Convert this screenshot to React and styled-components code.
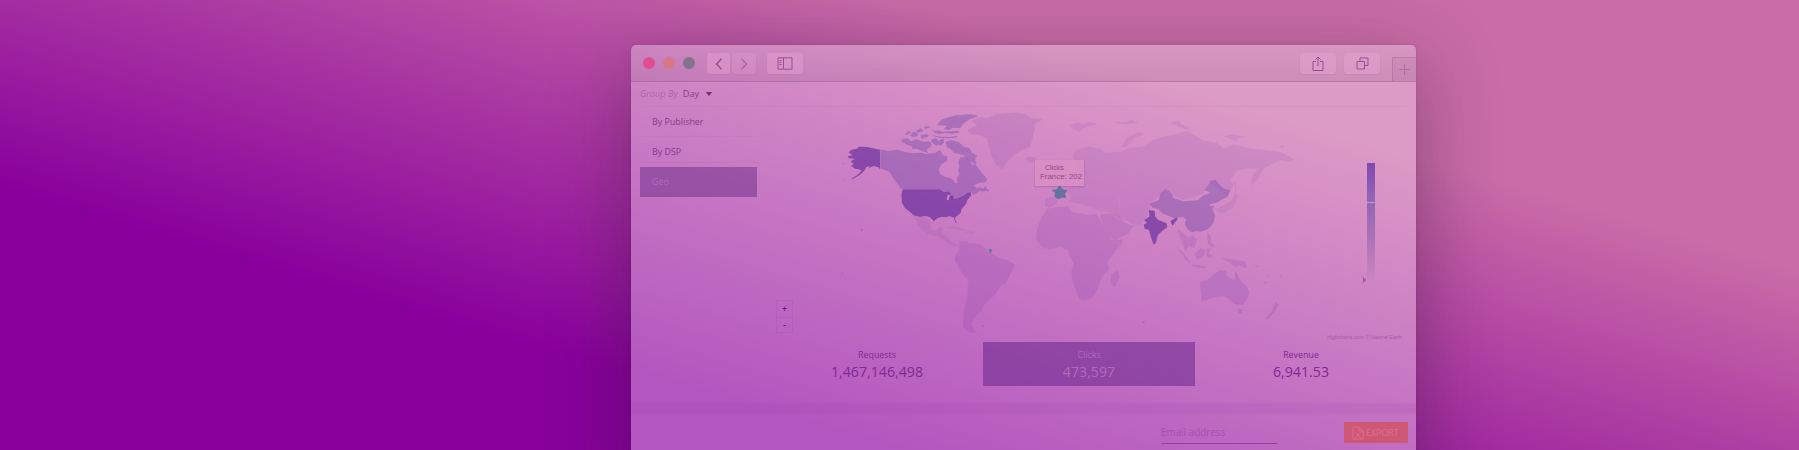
import React from "react";
import styled, { createGlobalStyle } from "styled-components";

const Global = createGlobalStyle`
  * { box-sizing: border-box; }
  body { margin: 0; font-family: "Open Sans", "Noto Sans", sans-serif; color: #7b3391; }
`;
const Hero = styled.main`
  height: 450px; overflow: hidden; padding: 45px 383px 0 631px;
  background: linear-gradient(16.7deg, #88009c 26.5%, #c96ca7 72.7%);
`;
const Window = styled.section`
  width: 785px; height: 460px; border-radius: 5px 5px 0 0; overflow: hidden;
  background: rgba(255, 238, 255, 0.36);
  box-shadow: 0 20px 80px rgba(40, 20, 40, 0.4), 0 0 3px rgba(80, 20, 80, 0.15);
`;
const Toolbar = styled.header`
  height: 37px; display: flex; align-items: center; padding: 0 0 1px 12px;
  background: linear-gradient(rgba(150, 100, 145, 0.08), rgba(150, 90, 135, 0.22));
  border-bottom: 1px solid rgba(125, 65, 120, 0.34);
`;
const Dot = styled.i`
  width: 12px; height: 12px; border-radius: 50%; margin: 0 8px 0 0; background: ${(p) => p.$color};
  position: relative; left: -0.5px;
`;
const ToolButton = styled.button`
  width: ${(p) => p.$w}px; height: 21px; margin: 2px 0 0 ${(p) => p.$gap || 0}px; padding: 0; border: 0;
  border-radius: 3px; display: grid; place-items: center; color: #9b4e94;
  background: rgba(235, 170, 215, 0.36); box-shadow: 0 1px 1px rgba(140, 70, 130, 0.12);
  opacity: ${(p) => (p.$dim ? 0.62 : 1)};
`;
const Spacer = styled.div`flex: 1;`;
const NewTab = styled.div`
  width: 24px; height: 24px; align-self: flex-end; margin: 0 0 -1px 12px; display: grid; place-items: center;
  color: #b06ea2; background: rgba(160, 90, 145, 0.13);
  border: solid rgba(145, 75, 135, 0.28); border-width: 1px 0 0 1px;
`;
const GroupBar = styled.div`
  height: 25px; margin: 0 10px 0 9px; display: flex; align-items: center; gap: 5px; padding-bottom: 1px; font-size: 9.2px;
  border-bottom: 1px solid rgba(150, 80, 150, 0.08); color: #873c8c;
`;
const GroupLabel = styled.em`color: #ae62ac;`;
const Caret = styled.i`
  margin-left: 2px; border: 3px solid transparent; border-top: 4px solid #74287c; border-bottom: 0;
`;
const Body = styled.div`display: flex; height: 297px;`;
const Side = styled.nav`width: 117px; margin-left: 9px; flex: none;`;
const SideItem = styled.div`
  height: ${(p) => p.$h}px; padding-left: 12px; font-size: 8.9px; line-height: ${(p) => p.$line || 30}px;
  border-bottom: 1px solid rgba(150, 80, 150, 0.08);
  color: ${(p) => (p.$active ? "#ae6cb6" : "#873c8c")};
  background: ${(p) => (p.$active ? "rgba(105, 45, 135, 0.5)" : "transparent")};
  margin-top: ${(p) => p.$top || 0}px;
`;
const Main = styled.div`flex: 1; display: flex; flex-direction: column; padding-left: 19px;`;
const MapRow = styled.div`display: flex; height: 235px; position: relative;`;
const Zoomer = styled.div`
  width: 17px; height: 33px; margin: 193px 37px 0 0; flex: none; display: grid; grid-template-rows: 1fr 1fr;
  border: 1px solid rgba(130, 50, 150, 0.11);
`;
const ZoomButton = styled.b`
  display: grid; place-items: center; font-size: 8px; line-height: 1; color: #6b1785;
  & + & { border-top: 1px solid rgba(130, 50, 150, 0.11); }
`;
const MapSvg = styled.svg`width: 470px; height: 240px; margin-top: -7px; flex: none; overflow: visible;`;
const Tooltip = styled.div`
  position: absolute; left: 259px; top: 53px; width: 49px; height: 26px; padding-left: 5px;
  font: 7.9px/9px "Liberation Sans", sans-serif; color: #95488f; white-space: nowrap; padding-top: 3px;
  background: rgba(217, 142, 196, 0.88); box-shadow: 0 1px 2px rgba(120, 50, 120, 0.34);
`;
const TipTitle = styled.div`padding-left: 5px; font-size: 7px;`;
const Legend = styled.div`
  width: 8px; height: 118px; margin: 56px 0 0 67px; position: relative;
  background: linear-gradient(#7f4aae, #9466b6 32%, #ab72b7 63%, #cc86c0);
`;
const Tick = styled.i`
  position: absolute; left: 0; right: 0; top: 39px; height: 1px; background: #c99ac7;
`;
const Pointer = styled.i`
  position: absolute; left: -4px; bottom: -2px; border: 3px solid transparent; border-left: 3px solid #a05196; border-right: 0;
`;
const Credit = styled.div`
  position: absolute; right: 14px; top: 226px; font: 5.3px/8px "Liberation Sans", sans-serif; color: #a85ca5;
`;
const Stats = styled.div`
  display: grid; grid-template-columns: 212px 212px 212px; margin-left: -5px; margin-top: auto; height: 62px; padding-bottom: 18px;
`;
const Stat = styled.div`
  height: 44px; text-align: center; padding-top: 7px;
  color: ${(p) => (p.$active ? "#b06abc" : "#7d2a94")};
  background: ${(p) => (p.$active ? "rgba(100, 35, 138, 0.52)" : "transparent")};
`;
const StatLabel = styled.div`font-size: 8.9px; line-height: 12px;`;
const StatValue = styled.div`font-size: 14.2px; line-height: 21px;`;
const Band = styled.div`
  height: 9px; background: rgba(145, 60, 170, 0.12); box-shadow: 0 0 3px rgba(145, 60, 170, 0.12);
`;
const Footer = styled.footer`display: flex; justify-content: flex-end; padding: 8px 8px 0 0;`;
const Email = styled.div`
  width: 116px; height: 23px; padding-top: 5px; margin-right: 67px; font-size: 9.9px; line-height: 13px; color: #a550ad;
  border-bottom: 1px solid #963fa1;
`;
const Export = styled.button`
  width: 64px; height: 21px; margin-top: 1px; border: 0; padding: 0 0 0 8px; display: flex; align-items: center; gap: 2px;
  background: #ce5775; color: #d9708f; font: 8.9px "Open Sans", sans-serif;
`;

const MID = "rgba(124,80,172,.46)";
const DARK = "rgba(106,48,160,.7)";
const TEAL = "#66729f";

function WorldMap() {
  return (
    <MapSvg viewBox="0 0 470 240">
      <g transform="scale(.33333)">
        <g fill="#9457b0" opacity=".21" stroke="#8d4aa5" strokeWidth="1">
          <path d="M412 91L443 75 425 62 450 52 475 55 500 43 560 38 590 45 600 55 636 58 615 72 612 95 605 120 600 140 575 150 550 165 530 185 517 208 500 195 485 170 478 140 470 115 450 104 425 102z" />
          <path d="M588 176L598 170 618 174 614 184 600 188zM246 344L285 352 300 365 303 388 318 394 328 382 340 385 335 402 350 408 360 425 385 435 375 440 350 425 325 410 300 405 280 392 265 375 255 355zM354 384L372 378 410 393 385 389 370 384zM409 394L436 397 432 401 410 398z" />
          <path fill="#8846ac" d="M389 425L408 423 420 430 440 430 455 436 470 450 492 464 505 474 530 480 552 492 548 510 536 530 528 548 508 560 500 576 488 590 475 602 462 615 455 630 440 645 430 655 425 672 432 690 438 697 425 699 408 690 398 678 402 655 400 640 408 610 414 580 415 540 400 525 385 500 374 480 378 465 388 450z" />
          <path fill="none" d="M380 460L410 455 425 435M410 455L430 480 455 455M430 480L420 515 445 530 470 560 490 585M415 540L435 560 425 610 415 670" />
        </g>
        <path fill={DARK} d="M150 149l-38-8-24-1-8 6-15 3-9 8 12 9-14 3 2 6 18 1-12 9 9 7-8 6 12 8 11 2 9 4-12 12-19 12 3 2 21-12 15-14 6-11 12-3-6 7 16-7 13 4 6 5z" />
        <path fill={DARK} d="M42 242l7-3-5 4zM37 189l6 0-3 3z" opacity=".6" />
        <path fill={MID} d="M151 149L179 153 201 149 226 156 245 160 275 158 286 162 314 159 330 150 338 165 352 170 350 184 335 192 326 206 330 222 345 230 360 234 370 240 376 250 383 248 381 235 389 222 384 212 388 200 385 185 392 172 408 170 420 183 425 195 435 192 445 205 456 220 472 238 468 245 445 250 432 256 440 264 452 262 460 268 444 276 430 285 424 275 410 284 400 290 385 296 368 300 360 292 362 282 345 276 330 267 218 267 212 266 205 255 190 235 178 215 165 210 151 206z" />
        <path fill={MID} d="M216 117l18-2 8 9 19-6 19 8 17-2 8 8-4 10-11 6 4 11-17-5-13-7-17-1-2-8-14-4-8-6-10-2zM226 101l10-8 8 5-16 8zM241 106l9-11 13 3 0 11-16 2zM257 92l16-7 6 8-14 5zM271 107l17-5 10 6-22 8zM303 119l15-6 10 13-7 11-14-7zM329 120l12-5 1 12-9 10-11-5zM321 75l15-17 40-12 46-3 24 5-26 9-20 15-10 13-23-2-9 7-17-2 9-10-20-2zM302 88l11 5 16-2 8 4 24-1 24-2 4 5-22 4-23-2-16 4-12-4zM300 104l15 3 18 3 25 1 21-3 4 4-23 3-26-1-17-4zM281 81l18-3 0 4-12 5z" />
        <path fill={MID} d="M347 125L365 120 389 128 401 140 419 145 425 158 442 166 435 176 440 192 426 188 412 178 402 166 388 162 372 158 362 148 350 140z" />
        <path fill={DARK} d="M218 268L330 268 342 276 356 275 364 283 352 286 350 300 356 300 360 286 369 287 371 298 380 296 400 288 412 280 422 276 424 286 412 300 408 312 395 326 392 338 378 350 374 356 380 368 377 369 370 352 358 349 345 352 335 350 322 355 312 364 300 352 288 348 270 350 252 346 240 336 225 325 216 308 214 285z" />
        <path fill={MID} d="M452 272L462 264 467 257 470 266 480 273 473 274 465 272 458 276z" />
        <path fill={TEAL} d="M477 446l8 2 0 9-7 2z" />
        <path fill="#9e45a2" d="M92 386l6 4-3 4zM455 677l7 0-1 4zM36 516l4 1-2 3z" opacity=".6" />
      </g>
      <g transform="translate(170 0) scale(.33333)">
        <g fill="#a060b8" opacity=".2" stroke="#8d4aa5" strokeWidth="1">
          <path d="M228 150L265 141 300 148 318 160 365 155 390 145 430 140 455 122 490 112 530 102 560 95 590 110 610 122 650 130 672 146 700 135 745 145 800 152 845 158 880 178 870 185 840 180 820 190 790 205 775 235 755 255 758 225 778 205 740 205 710 212 690 240 700 255 680 285 665 275 630 245 610 280 545 300 500 268 455 305 440 350 422 375 400 372 360 350 325 335 270 325 240 310 205 305 215 290 195 270 215 262 235 265 240 240 225 225 232 190 220 170z" />
          <path d="M210 76l24-8 14 7 20-8 20 5-32 9-17 13-19-8zM342 66l31 2 21-7 20 6-42 6zM364 139l17-22 30-20 20 4-29 12-22 26zM511 68l26-5 7 11 27 10-14 3-28-11zM674 109l23-5 40 7-24 3-7 10-20-12zM840 138l12 1-4 4z" />
          <path d="M703 242L708 260 705 283 695 303 676 314 658 323 646 329 656 336 671 339 683 329 700 321 709 296 717 282 707 288 707 266z" />
        </g>
        <g fill="#8846ac" opacity=".2" stroke="#8040a0" strokeWidth="1">
          <path fill="#a04cc0" d="M137 298l14-7 20 5-2 15-20 12-12-4z" />
          <path d="M142 326L174 322 205 320 212 335 235 340 262 345 290 343 305 368 322 400 335 420 368 420 362 435 340 462 322 485 326 510 305 530 300 550 290 570 275 595 252 600 240 598 230 575 218 545 215 515 222 490 210 470 204 450 180 440 150 448 125 440 108 415 112 388 125 350zM300 345L330 340 360 350 375 370 400 378 385 400 345 420 325 405 310 375zM334 524L353 512 358 530 344 561 332 549z" />
          <path fill="none" d="M112 390H165L184 335M172 345L203 375V440M207 380H300M218 430L252 414 284 434 308 410M209 470H263L278 490H320M236 344V417M257 385V480M216 511H272L300 521M239 512V564M260 516L249 557 235 580M275 504L268 543 256 574" />
          <path d="M533 388L551 401 565 415 575 405 590 419 583 443 565 437 557 455 545 425zM530 440L549 458 572 488 560 482zM574 494L600 496 620 502 608 503 580 500zM583 463L603 445 615 452 610 469 594 479zM619 449L631 443 628 461 638 470 627 474 620 467zM667 474L700 480 735 485 740 505 718 496 705 500 690 488zM622 398L633 411 632 425 644 438 635 442 624 431z" />
        </g>
        <path fill={MID} d="M449 311l28-11 4-20 15-12 12 5 10 12 0 8 31 11 44-3 15-13 24-10-19-8 11-13 8-15 15-2 13 16 12 10 20 5-10 20-16 7-12 9-22 5-4 6 14 1-5 9 8 18-4 22-17 20-22 7-16-2-12 4-10-9-10-15 5-15-13-7-24 4-35-15-13-13-16-4z" />
        <path fill={DARK} d="M447 330L464 333 466 350 475 360 500 370 502 382 487 392 473 406 468 428 461 434 453 412 447 390 434 386 431 375 441 368 432 360 448 350zM511 363L528 353 534 356 526 366 518 377 514 370z" />
        <path fill="rgba(145,85,187,.3)" d="M599 548L627 536 643 521 658 512 680 512 678 524 690 535 704 540 706 512 712 522 721 541 741 560 747 575 745 590 737 603 730 615 712 615 697 608 685 595 665 588 640 592 620 600 604 602 604 580zM714 626l14 2-4 13-9-2z" />
        <path fill="#9457b0" opacity=".3" d="M826 604l10 11-12 22-23 22-5-3 19-22zM788 543l16 5-9 3zM761 494l14 4-3 3zM797 525l8 0-2 4zM839 526l8 3-4 3z" />
        <path fill={TEAL} d="M180 256l8 12 14 3-7 11 4 12-14-1-10 5-12-8 2-12-11-8 16-2 5-7z" />
        <path fill="#a258a8" d="M426 663l10 3-6 4zM579 390l7 3-5 3z" opacity=".6" />
        <path fill="none" stroke="#de93c7" strokeOpacity=".3" strokeWidth="3" d="M211 308l17 2 6 8 14-6 9 8 22 4M351 291l8 14 1 20M326 336l35 26 28 7 13 18" />
      </g>
    </MapSvg>
  );
}

const Icon = ({ w = 16, h = 14, d, sw = 1 }) => (
  <svg width={w} height={h} viewBox={`0 0 ${w} ${h}`} fill="none" stroke="currentColor" strokeWidth={sw}>
    <path d={d} />
  </svg>
);

export default function App() {
  return (
    <Hero>
      <Global />
      <Window>
        <Toolbar>
          <Dot $color="#df4f8f" />
          <Dot $color="#d97785" />
          <Dot $color="#81758c" />
          <ToolButton $w={23} $gap={4}><Icon w={8} h={12} sw={1.5} d="M6.5 .7L1.5 6l5 5.3" /></ToolButton>
          <ToolButton $w={24} $gap={2} $dim><Icon w={8} h={12} sw={1.3} d="M1.5 .7L6.5 6l-5 5.3" /></ToolButton>
          <ToolButton $w={36} $gap={11}><Icon w={16} h={13} d="M1 .8h14v11.4H1zM6.500 1v11M2.5 3.5h2M2.5 5.5h2M2.5 7.5h2" /></ToolButton>
          <Spacer />
          <ToolButton $w={36}><Icon w={12} h={16} d="M4 5.5H1v9h10v-9H8M6 10V1M3.5 3.5L6 1l2.500 2.500" /></ToolButton>
          <ToolButton $w={36} $gap={8}><Icon w={13} h={13} d="M1 4.500h7.500V12H1zM4 4V1h8v7.500H9" /></ToolButton>
          <NewTab><Icon w={11} h={11} d="M5.500 0v11M0 5.500h11" /></NewTab>
        </Toolbar>
        <GroupBar><GroupLabel>Group By</GroupLabel><span>Day</span><Caret /></GroupBar>
        <Body>
          <Side>
            <SideItem $h={30}>By Publisher</SideItem>
            <SideItem $h={26}>By DSP</SideItem>
            <SideItem $h={30} $top={4} $active>Geo</SideItem>
          </Side>
          <Main>
            <MapRow>
              <Zoomer><ZoomButton>+</ZoomButton><ZoomButton>-</ZoomButton></Zoomer>
              <WorldMap />
              <Tooltip><TipTitle>Clicks</TipTitle>France: 202</Tooltip>
              <Legend><Tick /><Pointer /></Legend>
              <Credit>Highcharts.com © Natural Earth</Credit>
            </MapRow>
            <Stats>
              <Stat><StatLabel>Requests</StatLabel><StatValue>1,467,146,498</StatValue></Stat>
              <Stat $active><StatLabel>Clicks</StatLabel><StatValue>473,597</StatValue></Stat>
              <Stat><StatLabel>Revenue</StatLabel><StatValue>6,941.53</StatValue></Stat>
            </Stats>
          </Main>
        </Body>
        <Band />
        <Footer>
          <Email>Email address</Email>
          <Export><Icon w={12} h={14} d="M1 1h6l4 4v8H1zM7 1v4h4M3.500 6l5 6M8.500 6l-5 6" />EXPORT</Export>
        </Footer>
      </Window>
    </Hero>
  );
}
